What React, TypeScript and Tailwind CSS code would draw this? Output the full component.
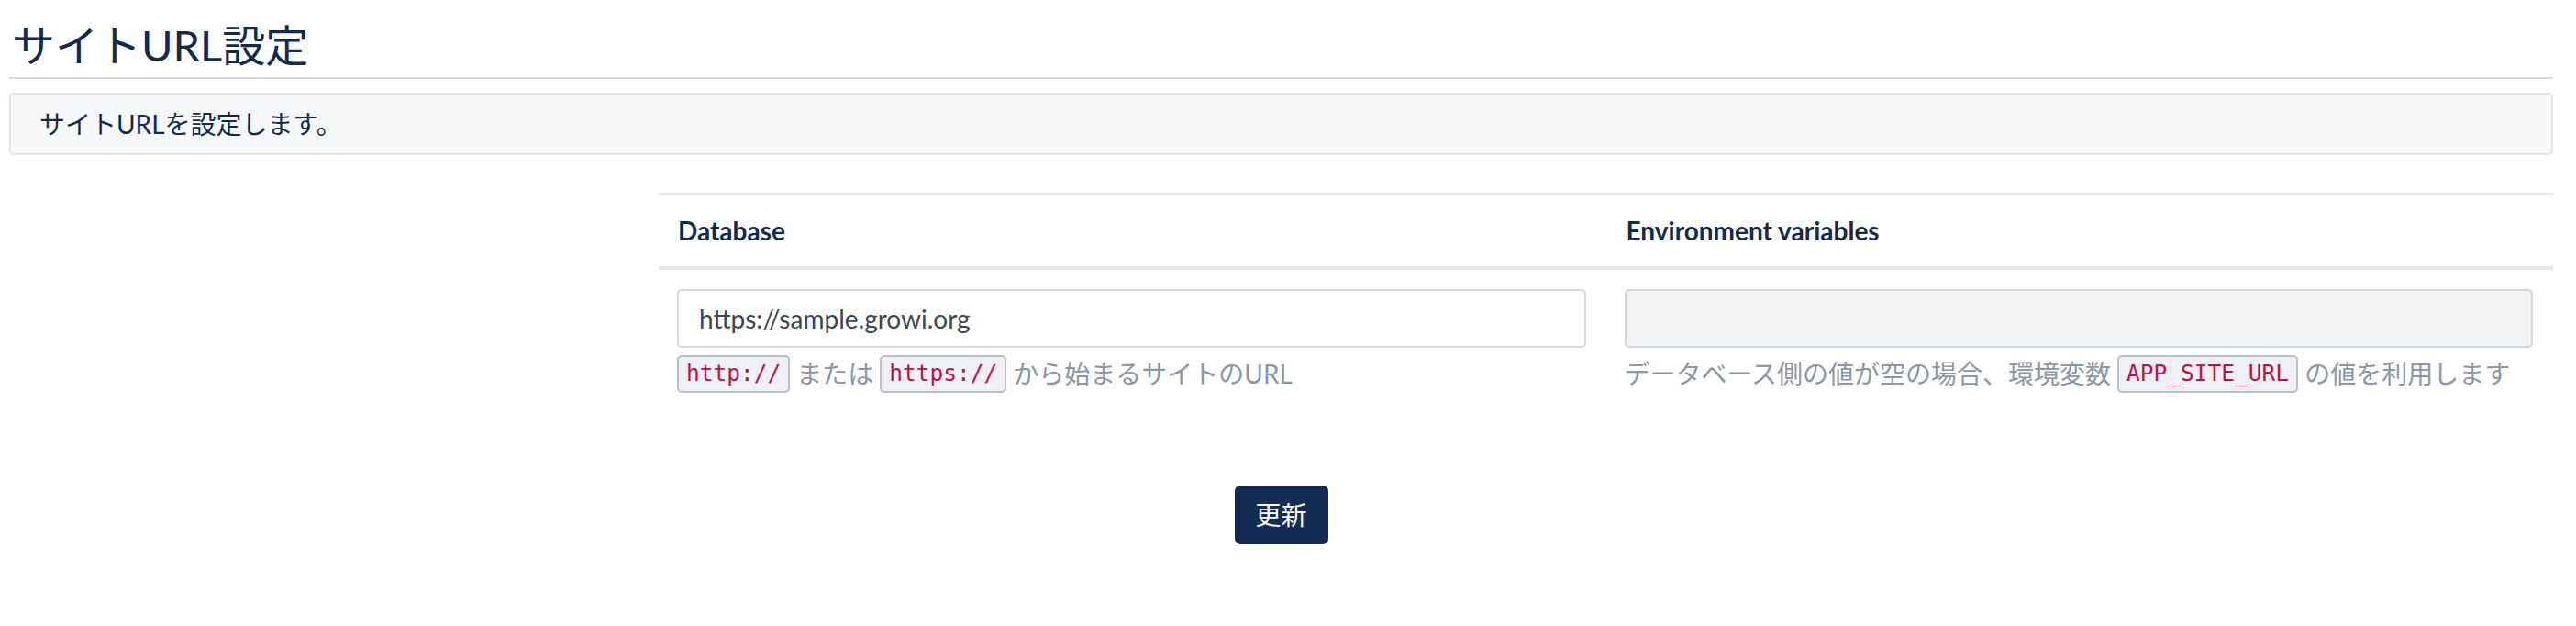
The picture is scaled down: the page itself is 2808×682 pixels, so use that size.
import React from 'react'

const font = "font-['Lato','Noto_Sans_CJK_JP',sans-serif]"

function Code({ children }: { children: React.ReactNode }) {
  return (
    <code className="inline-flex h-[41px] items-center rounded-[5px] border-2 border-[#b9bfc7] bg-[#eef0f3] px-[8px] font-['DejaVu_Sans_Mono',monospace] text-[24.5px] text-[#c0124a]">
      {children}
    </code>
  )
}

export default function App() {
  return (
    <div className={`${font} min-h-[682px] bg-white pl-[10px] pr-[25px] text-[#142a4b]`}>
      {/* ヘッダー */}
      <h2 className="border-b-2 border-[#d6d9dd] pt-[21px] pb-[7px] pl-[3px] text-[47px] leading-[56px] font-normal">
        サイトURL設定
      </h2>

      <div className="mt-[15px] rounded-[5px] border-2 border-[#e3e6ea] bg-[#f7f8fa] px-[31px] py-[11px] text-[28px] leading-[42px]">
        サイトURLを設定します。
      </div>

      {/* 設定テーブル */}
      <div className="mt-[41px] pl-[708px]">
        <table className="w-full table-fixed border-collapse">
          <thead>
            <tr className="border-t-2 border-b-4 border-[#e3e6ea]">
              <th className="w-1/2 pt-[18px] pb-[18px] pl-[21px] text-left text-[28px] leading-[42px] font-bold">Database</th>
              <th className="w-1/2 pt-[18px] pb-[18px] pl-[22px] text-left text-[28px] leading-[42px] font-bold">Environment variables</th>
            </tr>
          </thead>
          <tbody>
            <tr>
              <td className="pt-[21px] pb-[21px] pl-[20px] pr-[22px] align-top">
                <input
                  readOnly
                  value="https://sample.growi.org"
                  className="block h-[64px] w-full rounded-[5px] border-2 border-[#d3d7dc] bg-white px-[22px] text-[28px] text-[#3e4852] outline-none"
                />
                <div className="mt-[7px] flex items-center gap-[7px] text-[28px] leading-[42px] text-[#8c97a3]">
                  <Code>http://</Code>
                  <span>または</span>
                  <Code>https://</Code>
                  <span>から始まるサイトのURL</span>
                </div>
              </td>
              <td className="pt-[21px] pb-[21px] pl-[20px] pr-[22px] align-top">
                <input
                  readOnly
                  value=""
                  className="block h-[64px] w-full rounded-[5px] border-2 border-[#d3d7dc] bg-[#f1f2f3] px-[22px] text-[28px] outline-none"
                />
                <div className="mt-[7px] flex items-center gap-[7px] whitespace-nowrap text-[28px] leading-[42px] text-[#8c97a3]">
                  <span>データベース側の値が空の場合、環境変数</span>
                  <Code>APP_SITE_URL</Code>
                  <span>の値を利用します</span>
                </div>
              </td>
            </tr>
          </tbody>
        </table>
      </div>

      <div className="mt-[80px] flex justify-center">
        <button className="h-[64px] w-[102px] rounded-[6px] bg-[#142c54] text-[28px] leading-[42px] text-white">
          更新
        </button>
      </div>
    </div>
  )
}
